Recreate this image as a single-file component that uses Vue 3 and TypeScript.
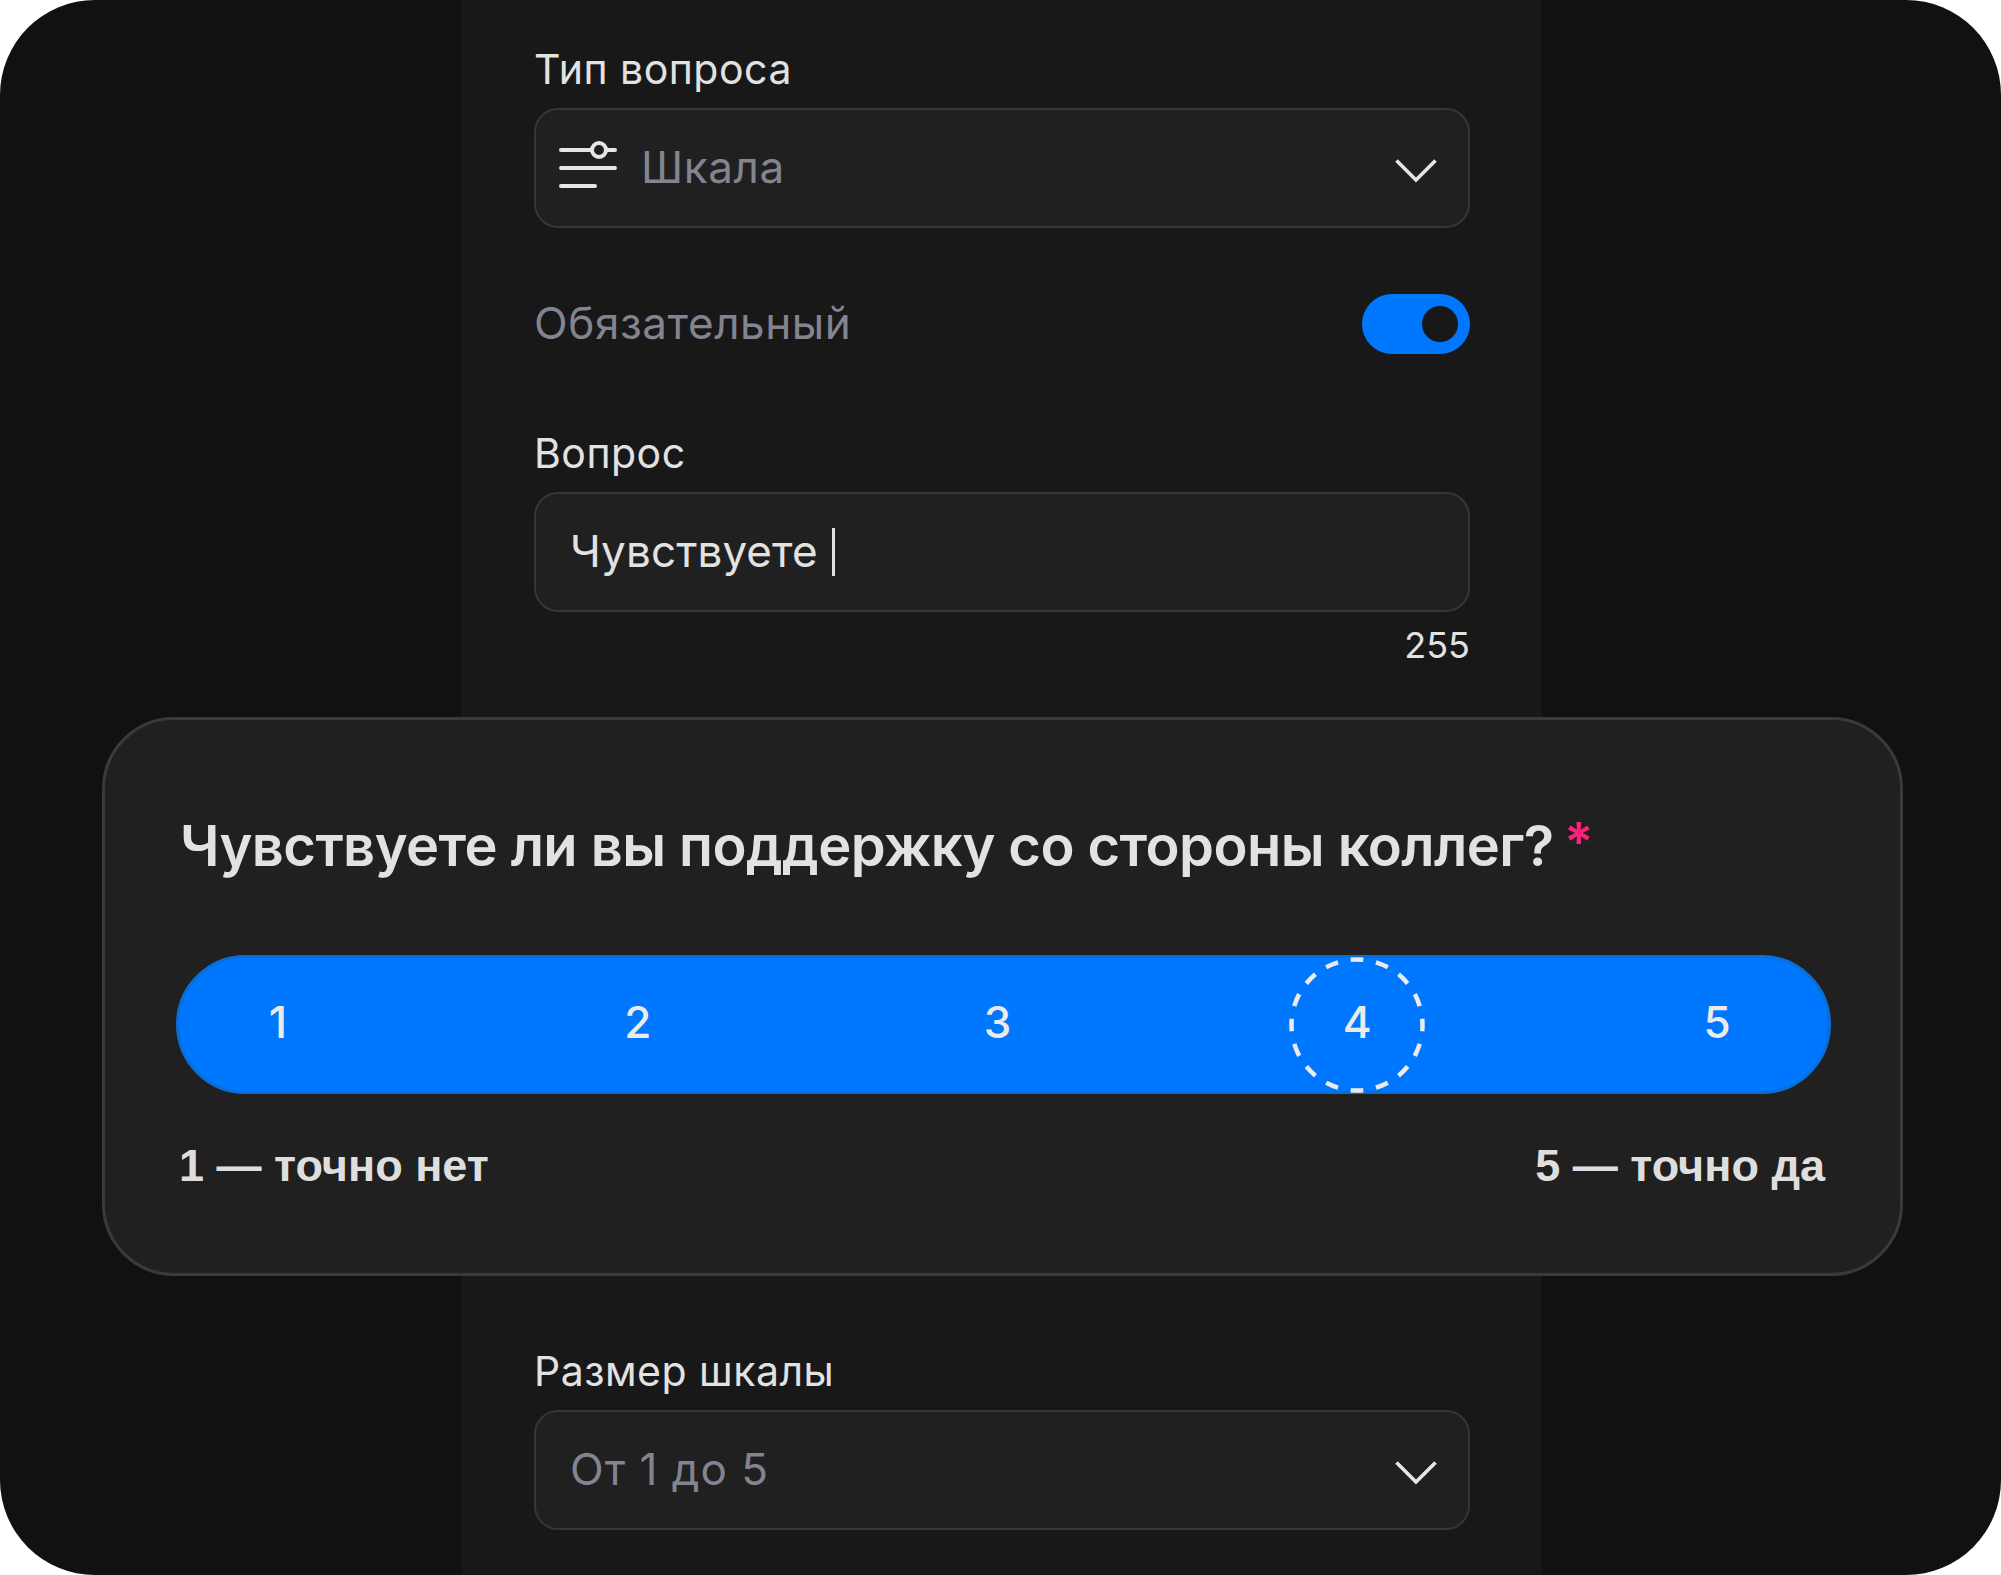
<script setup lang="ts">
const scale: number[] = [1, 2, 3, 4, 5]
</script>

<template>
  <div class="stage">
    <section class="form form-top">
      <label class="label label-first">Тип вопроса</label>
      <div class="field select">
        <svg class="type-icon" width="60" height="44" viewBox="0 0 60 44" fill="none" stroke="#e6e6e6" stroke-width="4" stroke-linecap="round">
          <path d="M2 10H56" />
          <path d="M2 28H56" />
          <path d="M2 46H36" />
          <circle cx="40" cy="10" r="7" fill="#202020" />
        </svg>
        <span class="value muted">Шкала</span>
        <svg class="chevron" width="42" height="24" viewBox="0 0 42 24" fill="none" stroke="#e6e6e6" stroke-width="3.6">
          <path d="M1.5 1.5L21 21L40.500 1.500" />
        </svg>
      </div>
      <div class="toggle-row">
        <span class="toggle-label muted">Обязательный</span>
        <div class="toggle"><span class="knob"></span></div>
      </div>
      <label class="label">Вопрос</label>
      <div class="field input">
        <span class="value typed">Чувствуете</span>
        <span class="caret"></span>
      </div>
      <div class="counter">255</div>
    </section>

    <section class="card">
      <h2 class="title">Чувствуете ли вы поддержку со стороны коллег? <span class="star">*</span></h2>
      <div class="bar">
        <div v-for="n in scale" :key="n" class="cell">
          <svg v-if="n === 4" class="ring" width="136" height="136" viewBox="0 0 136 136" fill="none">
            <circle cx="68" cy="68" r="65.500" stroke="#ebebeb" stroke-width="4.500" pathLength="320" stroke-dasharray="10 10" stroke-dashoffset="5" transform="rotate(-90 68 68)" />
          </svg>
          <span class="num">{{ n }}</span>
        </div>
      </div>
      <div class="legend">
        <span>1 — точно нет</span>
        <span>5 — точно да</span>
      </div>
    </section>

    <section class="form form-bottom">
      <label class="label">Размер шкалы</label>
      <div class="field select plain">
        <span class="value muted wide">От 1 до 5</span>
        <svg class="chevron" width="42" height="24" viewBox="0 0 42 24" fill="none" stroke="#e6e6e6" stroke-width="3.6">
          <path d="M1.5 1.5L21 21L40.500 1.500" />
        </svg>
      </div>
    </section>
  </div>
</template>

<style>
html, body { margin: 0; background: #fff; }
</style>

<style scoped>
.stage {
  width: 2001px;
  height: 1575px;
  border-radius: 95px;
  overflow: hidden;
  display: flex;
  flex-direction: column;
  font-family: Inter, "Liberation Sans", sans-serif;
  color: #e2e2e2;
  background: linear-gradient(90deg, #111111 0 462px, #181818 462px 1542px, #111111 1542px);
}
.form {
  margin-left: 534px;
  width: 936px;
  display: flex;
  flex-direction: column;
}
.label {
  font-size: 41px;
  letter-spacing: 0.5px;
  line-height: 45px;
  height: 48px;
  margin-bottom: 13px;
}
.label-first { margin-top: 47px; }
.field {
  box-sizing: border-box;
  height: 120px;
  border: 2px solid #363636;
  border-radius: 24px;
  background: #202020;
  display: flex;
  align-items: center;
}
.select { padding: 0 31px 0 23px; }
.select.plain { padding-left: 34px; }
.input { padding-left: 34px; }
.type-icon {
  overflow: visible;
  margin-right: 22px;
  height: 44px;
  transform: translateY(-6px);
}
.value {
  font-size: 44px;
  letter-spacing: 0.6px;
  line-height: 50px;
  padding-bottom: 2px;
}
.wide { letter-spacing: 1px; }
.muted { color: #82848f; }
.typed { color: #e2e2e2; letter-spacing: 0.1px; padding-bottom: 3px; }
.chevron { margin-left: auto; margin-top: 6px; }
.toggle-row {
  height: 60px;
  margin: 66px 0 77px;
  display: flex;
  align-items: center;
  justify-content: space-between;
}
.toggle-label { font-size: 44px; letter-spacing: 0.6px; line-height: 50px; padding-bottom: 2px; }
.toggle {
  box-sizing: border-box;
  width: 108px;
  height: 60px;
  border-radius: 30px;
  background: #0077ff;
  padding: 12px;
  display: flex;
  justify-content: flex-end;
}
.knob {
  width: 36px;
  height: 36px;
  border-radius: 50%;
  background: #181818;
}
.caret {
  width: 3px;
  height: 48px;
  margin-left: 14px;
  background: #e2e2e2;
}
.counter {
  text-align: right;
  font-size: 36px;
  line-height: 44px;
  margin-top: 11px;
  height: 44px;
}
.card {
  box-sizing: border-box;
  margin: 50px 0 0 102px;
  width: 1801px;
  height: 559px;
  border: 3px solid #3a3a3a;
  border-radius: 72px;
  background: #202020;
  padding: 0 68px 0 71px;
  display: flex;
  flex-direction: column;
}
.title {
  margin: 92px 0 0 4px;
  font-size: 56px;
  line-height: 68px;
  font-weight: 600;
  letter-spacing: -0.55px;
  white-space: nowrap;
}
.star { color: #ff1f7d; font-size: 54px; line-height: 0; margin-left: -3px; vertical-align: 5px; }
.bar {
  box-sizing: border-box;
  margin-top: 75px;
  height: 139px;
  width: 1655px;
  border: 3px solid #0a6ed9;
  border-radius: 70px;
  background: #0077ff;
  padding: 0 41px 0 29px;
  display: flex;
  justify-content: space-between;
  align-items: center;
}
.cell {
  position: relative;
  width: 140px;
  height: 133px;
  display: flex;
  align-items: center;
  justify-content: center;
}
.ring {
  position: absolute;
  left: 2px;
  top: -1.5px;
}
.num {
  font-size: 44px;
  font-weight: 500;
  line-height: 52px;
  padding-bottom: 6px;
  color: #ebebeb;
}
.legend {
  margin: 46px 7px 0 3px;
  display: flex;
  justify-content: space-between;
  font-family: "Liberation Sans", Arial, sans-serif;
  font-weight: 700;
  font-size: 45px;
  line-height: 52px;
  color: #dedede;
}
.form-bottom { margin-top: 73px; }
</style>
